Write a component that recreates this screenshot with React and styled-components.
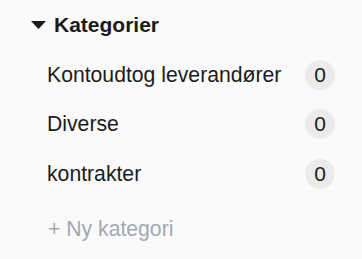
import React from "react";
import styled, { createGlobalStyle } from "styled-components";

const GlobalStyle = createGlobalStyle`
  html, body {
    margin: 0;
    padding: 0;
    background: #fafafa;
  }
  body {
    font-family: "Liberation Sans", Arial, sans-serif;
    color: #1c1c1c;
  }
`;

const Panel = styled.section`
  width: 362px;
  height: 259px;
  box-sizing: border-box;
  padding: 10px 27px 0 31px;
  background: #fafafa;
`;

const Header = styled.div`
  display: flex;
  align-items: center;
  gap: 8px;
  height: 30px;
`;

const Caret = styled.svg`
  width: 15px;
  height: 8px;
  flex: none;
`;

const Title = styled.h2`
  margin: 0;
  font-size: 21px;
  font-weight: 700;
  line-height: 30px;
  color: #1a1a1a;
`;

const List = styled.ul`
  list-style: none;
  margin: 9.75px 0 0;
  padding: 0 0 0 16px;
`;

const Row = styled.li`
  display: flex;
  align-items: center;
  justify-content: space-between;
  height: 49.5px;
  font-size: 21.2px;
`;

const Badge = styled.span`
  display: flex;
  align-items: center;
  justify-content: center;
  width: 30px;
  height: 30px;
  border-radius: 50%;
  background: #ebebeb;
  font-size: 21px;
  color: #1c1c1c;
`;

const AddButton = styled.button`
  display: block;
  margin: 15.75px 0 0 17px;
  padding: 0;
  height: 30px;
  border: 0;
  background: none;
  font-family: inherit;
  font-size: 21.2px;
  line-height: 30px;
  color: #a3a8b2;
  cursor: pointer;
`;

const categories = [
  { name: "Kontoudtog leverandører", count: 0 },
  { name: "Diverse", count: 0 },
  { name: "kontrakter", count: 0 },
];

export default function App() {
  return (
    <>
      <GlobalStyle />
      <Panel>
        <Header>
          <Caret viewBox="0 0 15 8">
            <polygon points="0,0 15,0 7.5,8" fill="#1a1a1a" />
          </Caret>
          <Title>Kategorier</Title>
        </Header>
        <List>
          {categories.map((c) => (
            <Row key={c.name}>
              <span>{c.name}</span>
              <Badge>{c.count}</Badge>
            </Row>
          ))}
        </List>
        <AddButton>+ Ny kategori</AddButton>
      </Panel>
    </>
  );
}
